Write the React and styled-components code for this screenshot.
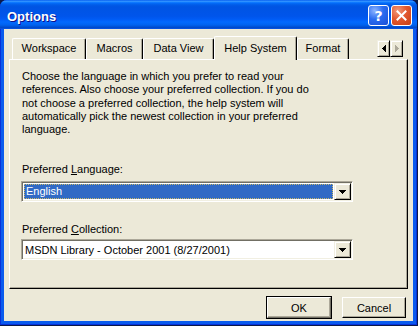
import React from 'react';
import styled, { createGlobalStyle } from 'styled-components';

const face = '#ECE9D8';
const light = '#F1EFE2';
const shadow = '#ACA899';
const dark = '#000000';

const GlobalStyle = createGlobalStyle`
  html, body {
    margin: 0;
    padding: 0;
    background: #0b1a4a;
  }
  body {
    font-family: "Liberation Sans", Arial, sans-serif;
    font-size: 11px;
    color: #000;
  }
`;

const Window = styled.div`
  width: 417px;
  height: 325px;
  box-sizing: border-box;
  display: flex;
  flex-direction: column;
  border-radius: 7px 7px 0 0;
  overflow: hidden;
  background: #0A5BEE;
  box-shadow: inset 1px 0 #0831D9, inset -1px 0 #0831D9, inset 0 -1px #0831D9;
`;

const TitleBar = styled.div`
  height: 29px;
  flex: none;
  display: flex;
  align-items: center;
  padding: 2px 5px 0 7px;
  box-sizing: border-box;
  background: linear-gradient(
    to bottom,
    #0058ee 0%,
    #3593ff 4%,
    #288eff 6%,
    #127dff 8%,
    #036ffc 10%,
    #0262ee 14%,
    #0057e5 20%,
    #0054e3 24%,
    #0055eb 56%,
    #005bf5 66%,
    #026afe 76%,
    #0062ef 86%,
    #0052d6 92%,
    #0046c8 96%,
    #0a5bee 100%
  );
`;

const Title = styled.div`
  flex: 1;
  color: #fff;
  font-family: "Liberation Sans", Arial, sans-serif;
  font-weight: bold;
  font-size: 13px;
  padding-top: 1px;
  text-shadow: 1px 1px #0f1089;
`;

const CaptionButton = styled.div`
  width: 21px;
  height: 21px;
  box-sizing: border-box;
  border: 1px solid #fff;
  border-radius: 3px;
  margin-left: 2px;
  display: flex;
  align-items: center;
  justify-content: center;
  color: #fff;
  font-family: "DejaVu Sans", sans-serif;
  font-weight: bold;
  font-size: 14px;
  background: ${(p) =>
    p.$close
      ? 'radial-gradient(circle at 30% 25%, #f19a7c 0%, #e2582f 45%, #c83f14 100%)'
      : 'radial-gradient(circle at 30% 25%, #8db4ff 0%, #2a6cf0 45%, #1a4fd6 100%)'};
`;

const Client = styled.div`
  flex: 1;
  margin: 0 4px 4px 4px;
  background: ${face};
  display: flex;
  flex-direction: column;
  padding: 7px 5px 0 5px;
`;

const TabStrip = styled.div`
  height: 23px;
  display: flex;
  align-items: flex-end;
  padding-left: 3px;
  position: relative;
  z-index: 1;
`;

const Tab = styled.div`
  width: ${(p) => p.$w}px;
  height: ${(p) => (p.$active ? 24 : 21)}px;
  margin-bottom: ${(p) => (p.$active ? -1 : 0)}px;
  box-sizing: border-box;
  background: ${face};
  border-top: 1px solid #fff;
  border-left: 1px solid #fff;
  border-right: 1px solid ${dark};
  border-radius: 2px 2px 0 0;
  box-shadow: inset -1px 0 ${shadow};
  padding-top: ${(p) => (p.$active ? 5 : 3)}px;
  line-height: 13px;
  text-align: center;
  white-space: nowrap;
`;

const Spinner = styled.div`
  display: flex;
  margin-left: auto;
  margin-right: 5px;
  align-self: flex-start;
  margin-top: 4px;
`;

const RaisedButton = styled.div`
  width: ${(p) => p.$w}px;
  height: ${(p) => p.$h}px;
  box-sizing: border-box;
  background: ${face};
  border-top: 1px solid ${light};
  border-left: 1px solid ${light};
  border-right: 1px solid ${dark};
  border-bottom: 1px solid ${dark};
  box-shadow: inset 1px 1px #fff, inset -1px -1px ${shadow};
  display: flex;
  align-items: center;
  justify-content: center;
  flex: none;
`;

const Panel = styled.div`
  height: 230px;
  box-sizing: border-box;
  border-top: 1px solid #fff;
  border-left: 1px solid #fff;
  border-right: 1px solid ${dark};
  border-bottom: 1px solid ${dark};
  box-shadow: inset -1px -1px ${shadow};
  padding: 10px 12px 0 12px;
`;

const Description = styled.p`
  margin: 0 0 27px 0;
  line-height: 13.3px;
`;

const Label = styled.div`
  line-height: 13px;
  margin-bottom: ${(p) => p.$gap}px;
`;

const Combo = styled.div`
  width: 332px;
  height: 21px;
  margin-left: -1px;
  margin-bottom: ${(p) => p.$after || 0}px;
  box-sizing: border-box;
  background: #fff;
  border-top: 1px solid ${shadow};
  border-left: 1px solid ${shadow};
  border-right: 1px solid #fff;
  border-bottom: 1px solid #fff;
  box-shadow: inset 1px 1px #716f64, inset -1px -1px ${light};
  padding: 1px;
  display: flex;
`;

const ComboText = styled.div`
  flex: 1;
  display: flex;
  align-items: center;
  padding: 1px 0 1px 2px;
  box-sizing: border-box;
`;

const Selection = styled.div`
  flex: 1;
  height: 15px;
  margin: 1px 1px 1px 1px;
  background: #316ac5;
  color: #fff;
  outline: 1px dotted #c9b96a;
  outline-offset: -1px;
  padding-left: 2px;
  line-height: 15px;
`;

const Footer = styled.div`
  display: flex;
  justify-content: flex-end;
  gap: 9px;
  padding: 7px 1px 0 0;
`;

const PushButton = styled.div`
  width: 66px;
  height: 23px;
  box-sizing: border-box;
  background: ${face};
  border: 1px solid ${(p) => (p.$default ? dark : 'transparent')};
  display: flex;
`;

const PushFace = styled.div`
  flex: 1;
  display: flex;
  align-items: center;
  justify-content: center;
  border-top: 1px solid #fff;
  border-left: 1px solid #fff;
  border-right: 1px solid ${(p) => (p.$default ? '#716f64' : dark)};
  border-bottom: 1px solid ${(p) => (p.$default ? '#716f64' : dark)};
  box-shadow: inset -1px -1px ${shadow};
`;

const Arrow = ({ dir, color = '#000' }) => {
  const pts = {
    down: '0,0 7,0 3.5,4',
    left: '4,0 4,7 0,3.5',
    right: '0,0 0,7 4,3.5',
  }[dir];
  const w = dir === 'down' ? 7 : 4;
  const h = dir === 'down' ? 4 : 7;
  return (
    <svg width={w} height={h} viewBox={`0 0 ${w} ${h}`}>
      <polygon points={pts} fill={color} shapeRendering="crispEdges" />
    </svg>
  );
};

const CloseGlyph = () => (
  <svg width="11" height="11" viewBox="0 0 11 11">
    <path d="M1.5 1.5 L9.5 9.5 M9.5 1.5 L1.5 9.5" stroke="#fff" strokeWidth="2" strokeLinecap="square" />
  </svg>
);

const tabs = [
  { name: 'Workspace', w: 74 },
  { name: 'Macros', w: 57 },
  { name: 'Data View', w: 71 },
  { name: 'Help System', w: 83, active: true },
  { name: 'Format', w: 52 },
];

export default function App() {
  return (
    <>
      <GlobalStyle />
      <Window>
        <TitleBar>
          <Title>Options</Title>
          <CaptionButton>?</CaptionButton>
          <CaptionButton $close>
            <CloseGlyph />
          </CaptionButton>
        </TitleBar>
        <Client>
          <TabStrip>
            {tabs.map((t) => (
              <Tab key={t.name} $w={t.w} $active={t.active}>
                {t.name}
              </Tab>
            ))}
            <Spinner>
              <RaisedButton $w={13} $h={17}>
                <Arrow dir="left" />
              </RaisedButton>
              <RaisedButton $w={13} $h={17}>
                <Arrow dir="right" color="#aca899" />
              </RaisedButton>
            </Spinner>
          </TabStrip>
          <Panel>
            <Description>
              Choose the language in which you prefer to read your
              <br />
              references. Also choose your preferred collection. If you do
              <br />
              not choose a preferred collection, the help system will
              <br />
              automatically pick the newest collection in your preferred
              <br />
              language.
            </Description>
            <Label $gap={5}>
              Preferred <u>L</u>anguage:
            </Label>
            <Combo $after={21}>
              <Selection>English</Selection>
              <RaisedButton $w={17} $h={17}>
                <Arrow dir="down" />
              </RaisedButton>
            </Combo>
            <Label $gap={3}>
              Preferred <u>C</u>ollection:
            </Label>
            <Combo>
              <ComboText>MSDN Library - October 2001 (8/27/2001)</ComboText>
              <RaisedButton $w={17} $h={17}>
                <Arrow dir="down" />
              </RaisedButton>
            </Combo>
          </Panel>
          <Footer>
            <PushButton $default>
              <PushFace $default>OK</PushFace>
            </PushButton>
            <PushButton>
              <PushFace>Cancel</PushFace>
            </PushButton>
          </Footer>
        </Client>
      </Window>
    </>
  );
}
